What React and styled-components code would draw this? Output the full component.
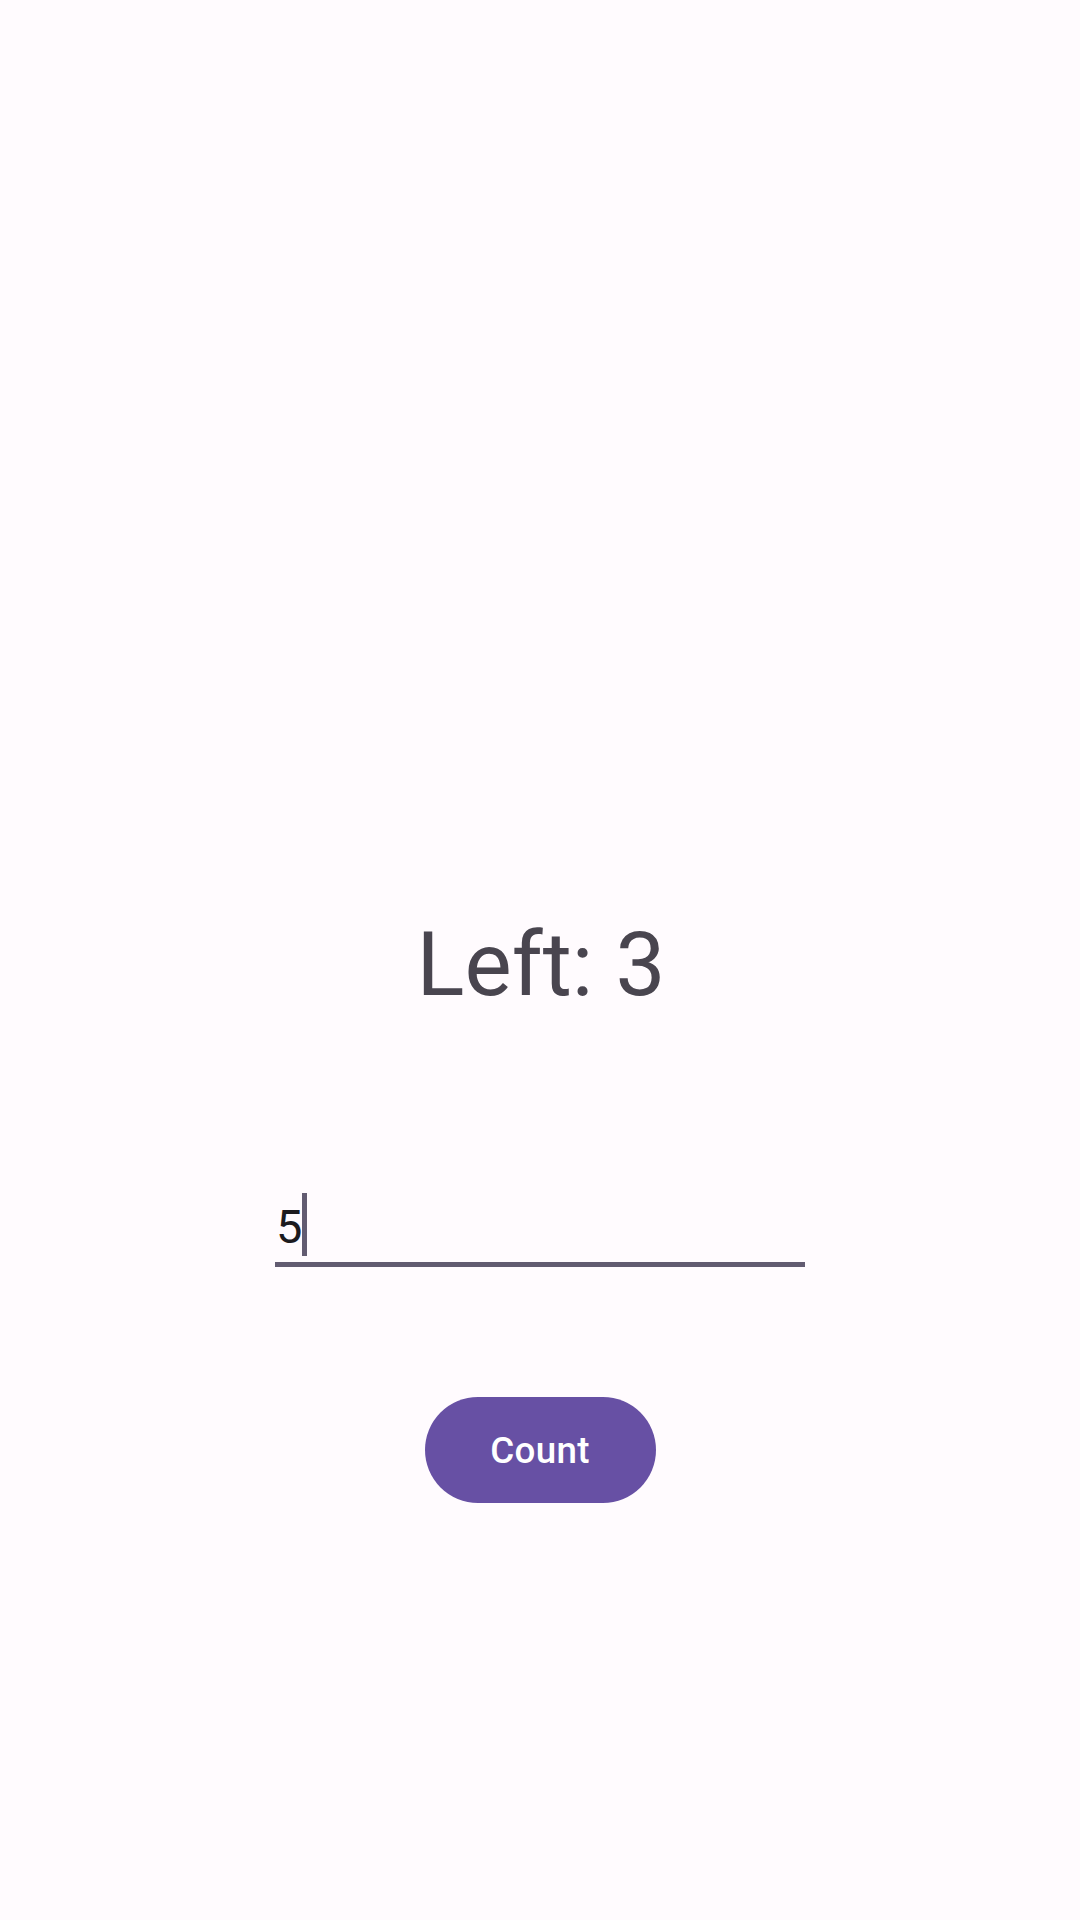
import React from 'react';
import styled, { createGlobalStyle } from 'styled-components';

const GlobalStyle = createGlobalStyle`
  html, body {
    margin: 0;
    padding: 0;
    background: #fffbfe;
  }
  body {
    font-family: Roboto, "Noto Sans", sans-serif;
  }
`;

function App() {
  const left = 3;
  const value = '5';
  return (
    <Screen>
      <GlobalStyle />
      <Title>Left: {left}</Title>
      <Field>
        <InputRow>
          <Value>{value}</Value>
          <Caret />
        </InputRow>
      </Field>
      <CountButton type="button">Count</CountButton>
    </Screen>
  );
}

const Screen = styled.div`
  width: 1080px;
  min-height: 1920px;
  box-sizing: border-box;
  padding-top: 920px;
  display: flex;
  flex-direction: column;
  align-items: center;
  background: #fffbfe;
`;

const Title = styled.h1`
  margin: 0;
  font-size: 89px;
  line-height: 89px;
  font-weight: 400;
  color: #49454f;
  padding-left: 2px;
`;

const Field = styled.div`
  width: 530px;
  margin-top: 184px;
  padding-bottom: 6px;
  border-bottom: 5px solid #625b71;
`;

const InputRow = styled.div`
  display: flex;
  align-items: flex-start;
  height: 63px;
  padding-left: 1px;
`;

const Value = styled.span`
  margin-top: 10px;
  font-size: 47px;
  line-height: 47px;
  color: #1c1b1f;
`;

const Caret = styled.span`
  width: 5px;
  height: 63px;
  margin-left: 0;
  background: #625b71;
`;

const CountButton = styled.button`
  margin-top: 130px;
  width: 231px;
  height: 106px;
  border: none;
  border-radius: 53px;
  background: #6750a4;
  color: #ffffff;
  font-family: Roboto, "Noto Sans", sans-serif;
  font-size: 36.75px;
  font-weight: 500;
  letter-spacing: 0.26px;
  padding: 0;
  cursor: pointer;
`;

export default App;
